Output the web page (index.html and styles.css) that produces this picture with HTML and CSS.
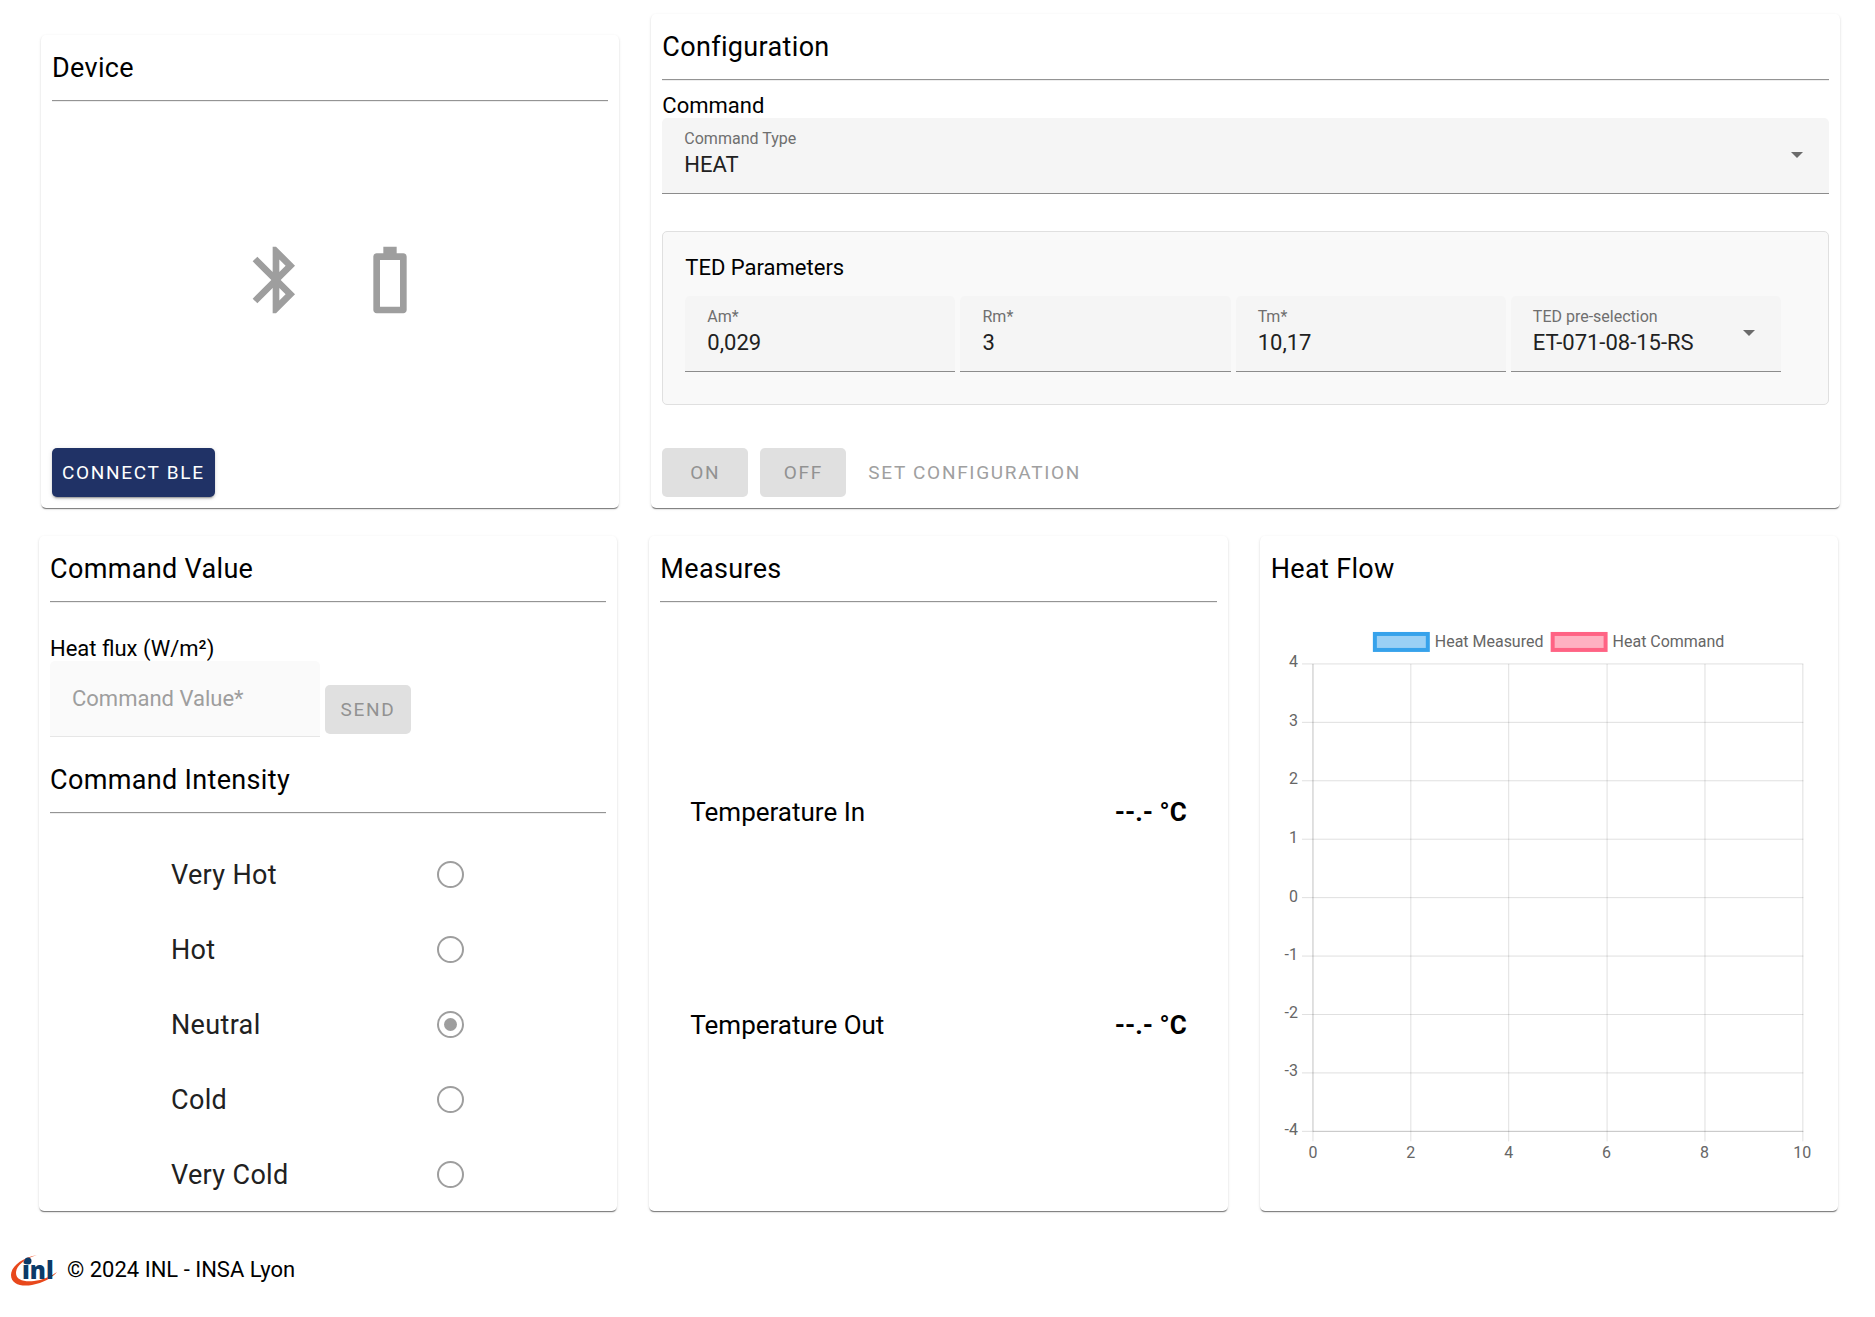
FILE: index.html
```html
<!DOCTYPE html>
<html lang="en">
<head>
  <meta charset="utf-8">
  <meta name="viewport" content="width=device-width, initial-scale=1">
  <title>TED Controller</title>
  <link rel="stylesheet" href="styles.css">
</head>
<body>
  <main>
    <div class="row row-top">
      <section class="card device">
        <h2>Device</h2>
        <hr>
        <div class="status-icons">
          <svg class="status-icon" viewBox="0 0 24 24"><path d="M17.71 7.71L12 2h-1v7.59L6.41 5 5 6.41 10.59 12 5 17.59 6.41 19 11 14.41V22h1l5.71-5.71-4.3-4.29 4.3-4.29zM13 5.83l1.88 1.88L13 9.59V5.83zm1.88 10.46L13 18.17v-3.76l1.88 1.88z"/></svg>
          <svg class="status-icon" viewBox="0 0 24 24"><path d="M17 5v16c0 .55-.45 1-1 1H8c-.55 0-1-.45-1-1V5c0-.55.45-1 1-1h2V2h4v2h2c.55 0 1 .45 1 1zm-2 1H9v14h6V6z"/></svg>
        </div>
        <div class="actions">
          <button class="btn btn-primary" type="button">CONNECT BLE</button>
        </div>
      </section>

      <section class="card config">
        <h2>Configuration</h2>
        <hr>
        <h3>Command</h3>
        <div class="field">
          <label for="command-type">Command Type</label>
          <select id="command-type">
            <option>HEAT</option>
          </select>
        </div>
        <div class="ted">
          <h3>TED Parameters</h3>
          <div class="ted-fields">
            <div class="field">
              <label for="am">Am*</label>
              <input id="am" type="text" value="0,029">
            </div>
            <div class="field">
              <label for="rm">Rm*</label>
              <input id="rm" type="text" value="3">
            </div>
            <div class="field">
              <label for="tm">Tm*</label>
              <input id="tm" type="text" value="10,17">
            </div>
            <div class="field">
              <label for="ted-select">TED pre-selection</label>
              <select id="ted-select">
                <option>ET-071-08-15-RS</option>
              </select>
            </div>
          </div>
        </div>
        <div class="actions">
          <button class="btn" type="button" disabled>ON</button>
          <button class="btn" type="button" disabled>OFF</button>
          <button class="btn btn-text" type="button" disabled>SET CONFIGURATION</button>
        </div>
      </section>
    </div>

    <div class="row row-bottom">
      <section class="card">
        <h2>Command Value</h2>
        <hr>
        <div class="flux">
          <h3><label for="command-value">Heat flux (W/m²)</label></h3>
          <div class="flux-form">
            <input class="flux-input" id="command-value" type="text" placeholder="Command Value*" disabled>
            <button class="btn" type="button" disabled>SEND</button>
          </div>
        </div>
        <h2>Command Intensity</h2>
        <hr>
        <div class="intensity">
          <div class="choice">
            <label for="very-hot">Very Hot</label>
            <input id="very-hot" type="radio" name="intensity" disabled>
          </div>
          <div class="choice">
            <label for="hot">Hot</label>
            <input id="hot" type="radio" name="intensity" disabled>
          </div>
          <div class="choice">
            <label for="neutral">Neutral</label>
            <input id="neutral" type="radio" name="intensity" checked disabled>
          </div>
          <div class="choice">
            <label for="cold">Cold</label>
            <input id="cold" type="radio" name="intensity" disabled>
          </div>
          <div class="choice">
            <label for="very-cold">Very Cold</label>
            <input id="very-cold" type="radio" name="intensity" disabled>
          </div>
        </div>
      </section>

      <section class="card">
        <h2>Measures</h2>
        <hr>
        <div class="measures">
          <div class="measure"><span>Temperature In</span><b>--.- °C</b></div>
          <div class="measure"><span>Temperature Out</span><b>--.- °C</b></div>
        </div>
      </section>

      <section class="card">
        <h2>Heat Flow</h2>
        <svg class="chart" viewBox="0 4 557 560">
          <!-- legend -->
          <rect class="measured" x="104" y="37" width="53" height="16"/>
          <text x="164" y="50">Heat Measured</text>
          <rect class="command" x="282" y="37" width="53" height="16"/>
          <text x="342" y="50">Heat Command</text>
          <!-- grid -->
          <path class="grid" d="M31 67H533M31 125.5H533M31 184H533M31 242.5H533M31 301H533M31 359.5H533M31 418H533M31 476.5H533M31 535H533"/>
          <path class="grid" d="M42 67V545M140 67V545M238 67V545M336.5 67V545M434.5 67V545M532.5 67V545"/>
          <path class="grid" d="M42 67V535H533"/>
          <g class="y-axis">
            <text x="27" y="70">4</text>
            <text x="27" y="129">3</text>
            <text x="27" y="187">2</text>
            <text x="27" y="246">1</text>
            <text x="27" y="305">0</text>
            <text x="27" y="363">-1</text>
            <text x="27" y="422">-2</text>
            <text x="27" y="480">-3</text>
            <text x="27" y="539">-4</text>
          </g>
          <g class="x-axis">
            <text x="42" y="562">0</text>
            <text x="140" y="562">2</text>
            <text x="238" y="562">4</text>
            <text x="336" y="562">6</text>
            <text x="434" y="562">8</text>
            <text x="532" y="562">10</text>
          </g>
        </svg>
      </section>
    </div>
  </main>

  <footer>
    <svg class="logo" viewBox="0 0 46 32">
      <path d="M26 1C10 4 0 13 0 21c0 9 10 12 21 10 11-2 20-7 25-13-7 5-15 8-23 9C13 28 5 26 5 19 5 12 13 5 26 1z"/>
      <text x="11" y="25">inl</text>
      <circle cx="17" cy="7" r="3.5"/>
    </svg>
    <span>© 2024 INL - INSA Lyon</span>
  </footer>
</body>
</html>
```
FILE: styles.css
```css
* {
  box-sizing: border-box;
}

body {
  margin: 0;
  background-color: #fff;
  color: #000;
  font-family: Roboto, "Liberation Sans", sans-serif;
  font-size: 22px;
  line-height: 26px;
}

h2 {
  margin: 0;
  padding: 17px 0 16px;
  font-size: 27px;
  font-weight: 400;
  line-height: 32px;
  letter-spacing: 0.0125em;
}

h3 {
  margin: 0;
  font-size: 22px;
  font-weight: 400;
  line-height: 24px;
}

hr {
  width: 100%;
  margin: 0;
  border: 0;
  border-top: 1px solid #949494;
  border-bottom: 1px solid #eee;
}

.row {
  display: grid;
  grid-template-columns: repeat(3, 1fr);
  gap: 32px;
}

.row-top {
  padding: 14px 35px 0 41px;
}

.row-bottom {
  padding: 28px 37px 0 39px;
}

.card {
  display: flex;
  flex-direction: column;
  padding: 0 11px 11px;
  border-radius: 5px;
  box-shadow: 0 2px 1px -1px rgba(0, 0, 0, 0.4), 0 1px 1px rgba(0, 0, 0, 0.14), 0 1px 3px rgba(0, 0, 0, 0.12);
}

.device {
  margin-top: 21px;
}

.config {
  grid-column: span 2;
}

/* device */

.status-icons {
  flex: 1;
  display: flex;
  justify-content: center;
  align-items: center;
  gap: 34px;
  padding: 10px 0 0 6px;
}

.status-icon {
  width: 80px;
  height: 80px;
  fill: #9e9e9e;
}

.actions {
  display: flex;
  gap: 12px;
}

.btn {
  min-width: 86px;
  height: 49px;
  padding: 0 10px;
  border: 0;
  border-radius: 5px;
  background-color: #e0e0e0;
  color: #929292;
  font-family: inherit;
  font-size: 19px;
  letter-spacing: 0.0893em;
}

.btn-primary {
  background-color: #203266;
  color: #fff;
  box-shadow: 0 3px 1px -2px rgba(0, 0, 0, 0.2), 0 2px 2px rgba(0, 0, 0, 0.14), 0 1px 5px rgba(0, 0, 0, 0.12);
}

.btn-text {
  background-color: transparent;
  color: #a0a0a0;
}

/* fields */

.field {
  position: relative;
  display: flex;
  flex-direction: column;
  height: 76px;
  padding: 11px 22px 0;
  border-bottom: 1px solid #8c8c8c;
  border-radius: 5px 5px 0 0;
  background-color: #f5f5f5;
}

.field label {
  color: #6f6f6f;
  font-size: 16px;
  line-height: 20px;
}

.field input,
.field select {
  width: 100%;
  height: 30px;
  padding: 0;
  border: 0;
  outline: 0;
  appearance: none;
  background-color: transparent;
  color: #212121;
  font-family: inherit;
  font-size: 22px;
}

.field:has(select)::after {
  content: "";
  position: absolute;
  top: 34px;
  right: 26px;
  border: 6px solid transparent;
  border-top-color: #6b6b6b;
  border-bottom: 0;
}

.config > h3 {
  padding-top: 13px;
}

.ted {
  margin: 37px 0 43px;
  padding: 24px 47px 32px 22px;
  border: 1px solid #e0e0e0;
  border-radius: 5px;
  background-color: #f9f9f9;
}

.ted-fields {
  display: grid;
  grid-template-columns: repeat(4, 1fr);
  gap: 5px;
  margin-top: 16px;
}

/* command value */

.flux {
  padding: 34px 0 10px;
}

.flux-form {
  display: flex;
  align-items: flex-end;
  gap: 5px;
}

.flux-form .btn {
  margin-bottom: 3px;
}

.flux-input {
  width: 270px;
  height: 76px;
  padding: 0 22px;
  border: 0;
  border-bottom: 1px solid #e6e6e6;
  border-radius: 5px 5px 0 0;
  background-color: #fafafa;
  font-family: inherit;
  font-size: 22px;
}

.flux-input::placeholder {
  color: #9e9e9e;
}

.intensity {
  display: flex;
  flex-direction: column;
  gap: 48px;
  padding: 47px 142px 12px 121px;
}

.choice {
  display: flex;
  justify-content: space-between;
  align-items: center;
  height: 27px;
  color: #212121;
  font-size: 27px;
  letter-spacing: 0.0125em;
}

.choice input {
  appearance: none;
  width: 27px;
  height: 27px;
  margin: 0;
  padding: 5px;
  border: 2px solid #9e9e9e;
  border-radius: 50%;
  background-clip: content-box;
}

.choice input:checked {
  background-color: #9e9e9e;
}

/* measures */

.measures {
  flex: 1;
  display: flex;
  flex-direction: column;
  justify-content: space-evenly;
  padding: 34px 30px 0;
}

.measure {
  display: flex;
  justify-content: space-between;
  padding: 25px 0;
  font-size: 26px;
}

/* heat flow */

.chart {
  width: 100%;
  overflow: visible;
}

.chart text {
  fill: #666;
  font-size: 16px;
}

.measured {
  fill: #9ad0f5;
  stroke: #36a2eb;
  stroke-width: 4px;
}

.command {
  fill: #ffb1c1;
  stroke: #ff6384;
  stroke-width: 4px;
}

.grid {
  fill: none;
  stroke: rgba(0, 0, 0, 0.13);
}

.y-axis {
  text-anchor: end;
}

.x-axis {
  text-anchor: middle;
}

footer {
  display: flex;
  align-items: center;
  gap: 10px;
  padding: 43px 11px 24px;
}

.logo {
  width: 46px;
  height: 32px;
  overflow: visible;
}

.logo text,
.logo circle {
  fill: #0b3a68;
}

.logo text {
  font-family: "Open Sans", sans-serif;
  font-size: 24px;
  font-weight: 800;
}

.logo path {
  fill: #e8481c;
}
```
